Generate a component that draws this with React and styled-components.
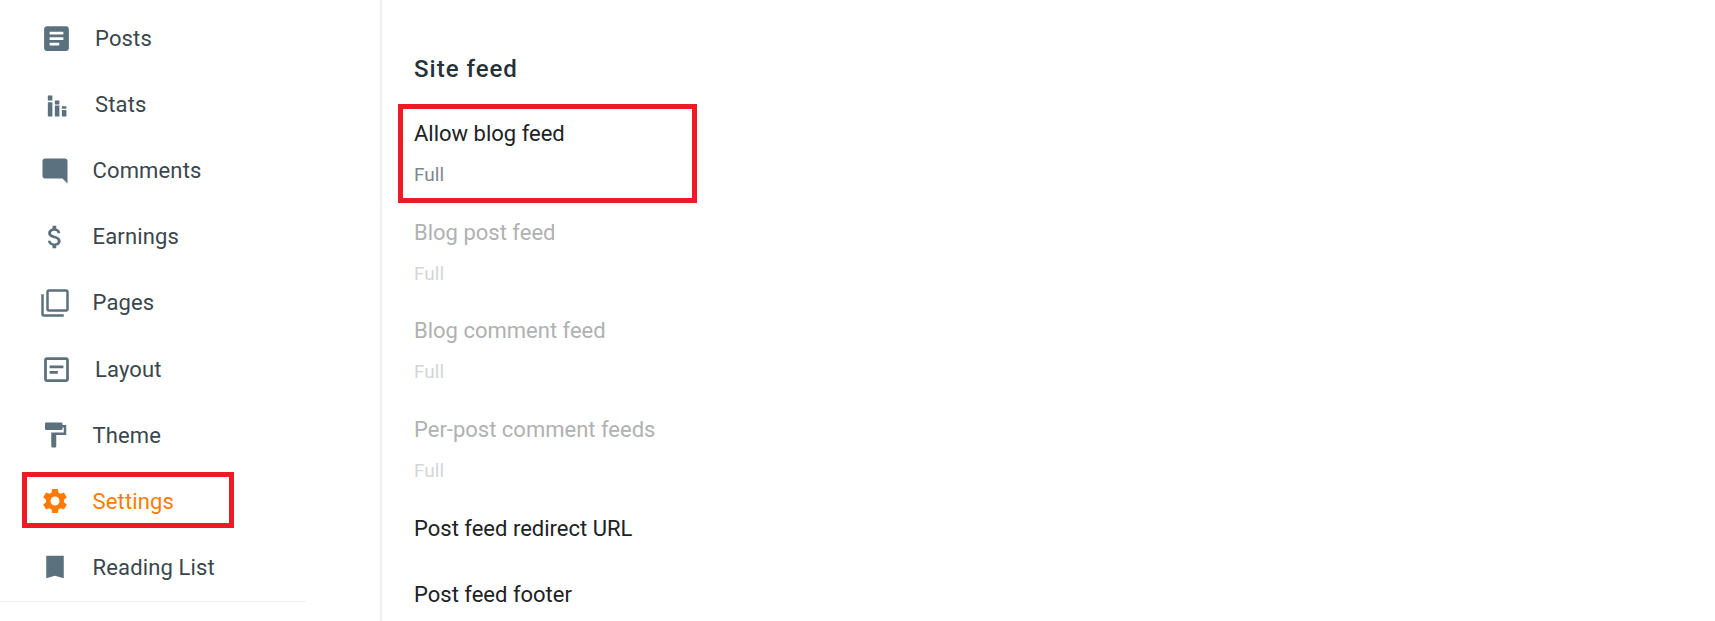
import styled, { createGlobalStyle } from "styled-components";

const GlobalStyle = createGlobalStyle`
  html, body {
    margin: 0;
    padding: 0;
    height: 100%;
    overflow: hidden;
    background: #ffffff;
  }
  body {
    font-family: Roboto, "Liberation Sans", sans-serif;
  }
`;

const ICONS = {
  posts: "M19 3H5c-1.1 0-2 .9-2 2v14c0 1.1.9 2 2 2h14c1.1 0 2-.9 2-2V5c0-1.1-.9-2-2-2zm-5 14H7v-2h7v2zm3-4H7v-2h10v2zm0-4H7V7h10v2z",
  stats: "M5.7 5.5h3.3v3.6H5.7zM5.7 10.3h3.3v10.4H5.7zM10.8 9.1h3.3V12h-3.3zM10.8 12.8h3.3v7.9h-3.3zM15.9 13.3h3.3V15h-3.3zM15.9 16h3.3v4.7h-3.3z",
  comments: "M21.99 4c0-1.1-.89-2-1.99-2H4c-1.1 0-2 .9-2 2v12c0 1.1.9 2 2 2h14l4 4-.01-18z",
  earnings: "M11.8 10.9c-2.27-.59-3-1.2-3-2.15 0-1.09 1.01-1.85 2.7-1.85 1.78 0 2.44.85 2.5 2.1h2.21c-.07-1.72-1.12-3.3-3.21-3.81V3h-3v2.16c-1.94.42-3.5 1.68-3.5 3.61 0 2.31 1.91 3.46 4.7 4.13 2.5.6 3 1.48 3 2.41 0 .69-.49 1.79-2.7 1.79-2.06 0-2.87-.92-2.98-2.1h-2.2c.12 2.19 1.76 3.42 3.68 3.83V21h3v-2.15c1.95-.37 3.5-1.5 3.5-3.55 0-2.84-2.43-3.81-4.7-4.4z",
  pages: "M3 5H1v16c0 1.1.9 2 2 2h16v-2H3V5zm18-4H7c-1.1 0-2 .9-2 2v14c0 1.1.9 2 2 2h14c1.1 0 2-.9 2-2V3c0-1.1-.9-2-2-2zm0 16H7V3h14v14z",
  layout: "M19 3H5c-1.1 0-2 .9-2 2v14c0 1.1.9 2 2 2h14c1.1 0 2-.9 2-2V5c0-1.1-.9-2-2-2zm0 16H5V5h14v14zM7 9h10v2H7zm0 4h6v2H7z",
  theme: "M18 4V3c0-.55-.45-1-1-1H5c-.55 0-1 .45-1 1v4c0 .55.45 1 1 1h12c.55 0 1-.45 1-1V6h1v4H9v11c0 .55.45 1 1 1h2c.55 0 1-.45 1-1v-9h8V4h-3z",
  settings: "M19.14 12.94c.04-.3.06-.61.06-.94 0-.32-.02-.64-.07-.94l2.03-1.58c.18-.14.23-.41.12-.61l-1.92-3.32c-.12-.22-.37-.29-.59-.22l-2.39.96c-.5-.38-1.03-.7-1.62-.94l-.36-2.54c-.04-.24-.24-.41-.48-.41h-3.84c-.24 0-.43.17-.47.41l-.36 2.54c-.59.24-1.13.57-1.62.94l-2.39-.96c-.22-.08-.47 0-.59.22L2.74 8.87c-.12.21-.08.47.12.61l2.03 1.58c-.05.3-.09.63-.09.94s.02.64.07.94l-2.03 1.58c-.18.14-.23.41-.12.61l1.92 3.32c.12.22.37.29.59.22l2.39-.96c.5.38 1.03.7 1.62.94l.36 2.54c.05.24.24.41.48.41h3.84c.24 0 .44-.17.47-.41l.36-2.54c.59-.24 1.13-.56 1.62-.94l2.39.96c.22.08.47 0 .59-.22l1.92-3.32c.12-.22.07-.47-.12-.61l-2.01-1.58zM12 15.6c-1.98 0-3.6-1.62-3.6-3.6s1.62-3.6 3.6-3.6 3.6 1.62 3.6 3.6-1.62 3.6-3.6 3.6z",
  reading: "M5 3h14v18l-7-2-7 2z",
};

const NAV_ITEMS = [
  { key: "posts", label: "Posts", size: 33, slot: 55 },
  { key: "stats", label: "Stats", size: 33, slot: 55 },
  { key: "comments", label: "Comments", size: 30, slot: 52.5 },
  { key: "earnings", label: "Earnings", size: 30, slot: 52.5 },
  { key: "pages", label: "Pages", size: 30, slot: 52.5 },
  { key: "layout", label: "Layout", size: 33, slot: 55 },
  { key: "theme", label: "Theme", size: 30, slot: 52.5 },
  { key: "settings", label: "Settings", size: 30, slot: 52.5, active: true },
  { key: "reading", label: "Reading List", size: 30, slot: 52.5 },
];

const FEED_ROWS = [
  { title: "Allow blog feed", value: "Full", marked: true },
  { title: "Blog post feed", value: "Full", disabled: true },
  { title: "Blog comment feed", value: "Full", disabled: true },
  { title: "Per-post comment feeds", value: "Full", disabled: true },
  { title: "Post feed redirect URL" },
  { title: "Post feed footer" },
];

const NavIcon = ({ name, size, slot }) => (
  <IconSlot $width={slot}>
    <svg width={size} height={size} viewBox="0 0 24 24" fill="currentColor">
      <path d={ICONS[name]} />
    </svg>
  </IconSlot>
);

const App = () => {
  return (
    <Page>
      <GlobalStyle />
      <Sidebar>
        <NavList>
          {NAV_ITEMS.map((item) => (
            <NavRow key={item.key} $active={item.active}>
              {item.active && <SettingsMark />}
              <NavIcon name={item.key} size={item.size} slot={item.slot} />
              <NavLabel $active={item.active}>{item.label}</NavLabel>
            </NavRow>
          ))}
        </NavList>
        <NavDivider />
      </Sidebar>
      <Content>
        <Heading>Site feed</Heading>
        {FEED_ROWS.map((row) => (
          <FeedRow key={row.title} $double={!!row.value}>
            {row.marked && <FeedMark />}
            <FeedTitle $disabled={row.disabled}>{row.title}</FeedTitle>
            {row.value && <FeedValue $disabled={row.disabled}>{row.value}</FeedValue>}
          </FeedRow>
        ))}
      </Content>
    </Page>
  );
};

const Page = styled.div`
  display: flex;
  width: 1715px;
  height: 621px;
  overflow: hidden;
  background: #ffffff;
`;

const Sidebar = styled.aside`
  flex: 0 0 382px;
  height: 621px;
  box-sizing: border-box;
  border-right: 2px solid #eff0f1;
`;

const NavList = styled.nav`
  display: flex;
  flex-direction: column;
  padding-top: 5.5px;
`;

const NavRow = styled.div`
  position: relative;
  display: flex;
  align-items: center;
  height: 66.1px;
  padding-left: 40px;
  color: ${(p) => (p.$active ? "#ff7b00" : "#5b717d")};
`;

const IconSlot = styled.span`
  display: flex;
  flex: 0 0 ${(p) => p.$width}px;
  align-items: center;
`;

const NavLabel = styled.span`
  font-size: 22px;
  letter-spacing: 0.15px;
  color: ${(p) => (p.$active ? "#ff7b00" : "#3a464d")};
`;

const NavDivider = styled.div`
  width: 306px;
  height: 1px;
  margin-top: 0.6px;
  background: #eceeef;
`;

const SettingsMark = styled.span`
  position: absolute;
  left: 22px;
  top: 3.8px;
  width: 212px;
  height: 56px;
  box-sizing: border-box;
  border: 5px solid #ed1c24;
`;

const Content = styled.main`
  flex: 1;
  padding: 51px 0 0 32px;
`;

const Heading = styled.h2`
  margin: 0 0 32px;
  font-size: 24px;
  line-height: 36px;
  font-weight: 500;
  letter-spacing: 1px;
  color: #263238;
`;

const FeedRow = styled.div`
  position: relative;
  display: flex;
  flex-direction: column;
  height: ${(p) => (p.$double ? "98.7px" : "66px")};
`;

const FeedTitle = styled.div`
  font-size: 22px;
  line-height: 30px;
  color: ${(p) => (p.$disabled ? "#b0b1b2" : "#202124")};
`;

const FeedValue = styled.div`
  margin-top: 11px;
  font-size: 19px;
  line-height: 30px;
  color: ${(p) => (p.$disabled ? "#d5d6d7" : "#7d8792")};
`;

const FeedMark = styled.span`
  position: absolute;
  left: -16px;
  top: -15px;
  width: 299px;
  height: 99px;
  box-sizing: border-box;
  border: 5px solid #ed1c24;
`;

export default App;
